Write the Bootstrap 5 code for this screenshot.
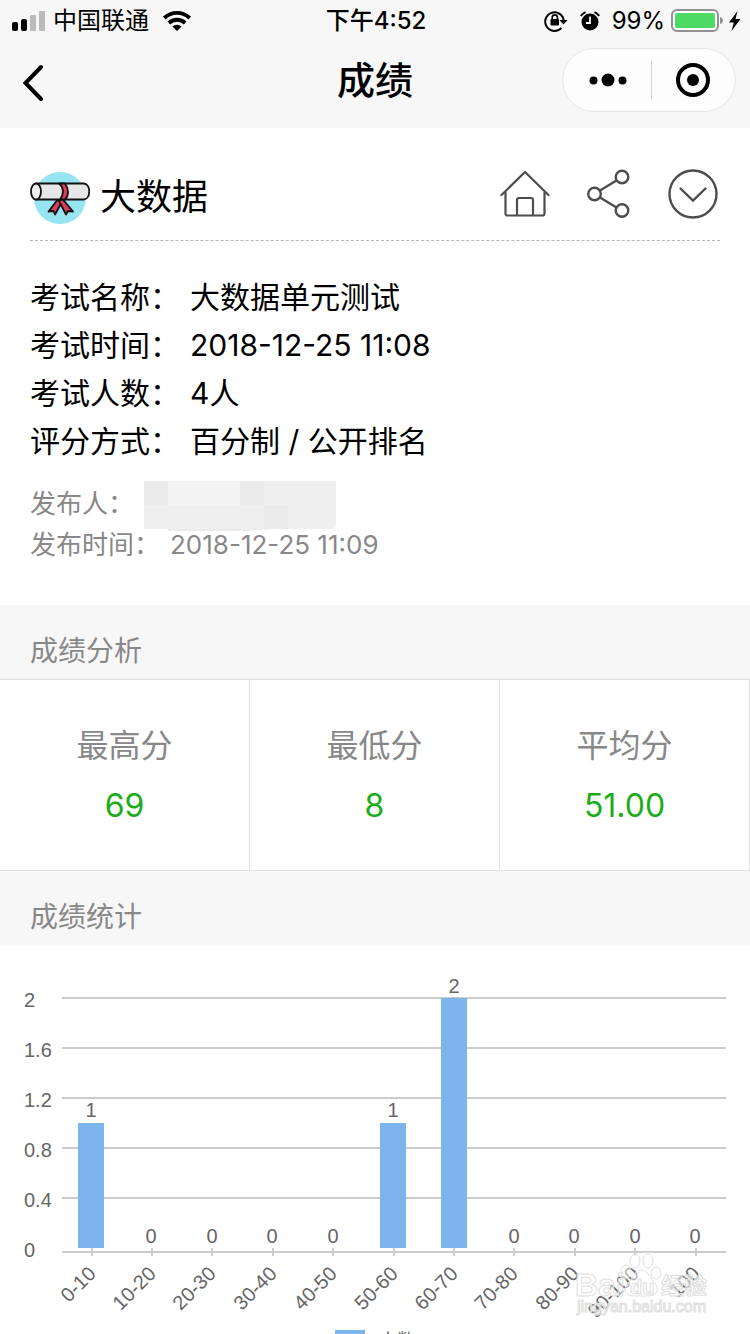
<!DOCTYPE html>
<html lang="zh-CN">
<head>
<meta charset="utf-8">
<meta name="viewport" content="width=device-width, initial-scale=1">
<title>成绩</title>
<link rel="stylesheet" href="https://cdn.jsdelivr.net/npm/bootstrap@5.3.0/dist/css/bootstrap.min.css">
<script src="https://cdn.jsdelivr.net/npm/bootstrap@5.3.0/dist/js/bootstrap.bundle.min.js"></script>
<style>
  body { font-family: Inter, "Noto Sans CJK SC", sans-serif; color: #000; background: #fff; overflow-x: hidden; }
  svg { display: block; flex: none; }
  .top-area { background: #f7f7f7; }
  .equal { flex: 1 1 0; }
  .status-bar { height: 40px; font-size: 24px; line-height: 40px; padding: 2px 9px 0 11px; }
  .signal { margin-left: 1px; margin-right: 7px; }
  .clock { font-weight: 500; }
  .status-right { gap: 12px; }
  .power { gap: 6px; }
  .nav-bar { height: 88px; padding: 0 14px 8px; }
  .back { padding: 8px 0 0 8px; }
  .nav-title { font-size: 38px; line-height: 48px; font-weight: 500; }
  .capsule { height: 64px; width: 174px; border: 1px solid #e6e6e6; background: #fdfdfd; border-radius: 32px; }
  .capsule .split { width: 1px; height: 38px; background: #d2d2d2; }
  .bare { border: 0; background: none; color: inherit; }
  .bare:not(.back) { padding: 0; }
  .exam { padding: 40px 30px; }
  .exam-head { height: 73px; padding-bottom: 14px; border-bottom: 1px dashed #b4b9b4; }
  .exam-title { gap: 10px; }
  .exam-name { font-size: 36px; line-height: 48px; font-weight: 400; }
  .tools { color: #4d4d4d; gap: 37px; padding: 0 2px 6px 0; }
  .facts { font-size: 30px; line-height: 48px; padding-top: 32px; }
  .facts dt, .facts dd, .origin dt, .origin dd { font-weight: inherit; margin: 0; }
  .facts dt { width: 160px; }
  .origin { font-size: 26px; line-height: 40px; padding-top: 16px; color: #888; }
  .origin dt { width: 140px; }
  .origin .masked { height: 44px; line-height: 46px; }
  .origin .masked dt { width: 114px; }
  .section-title { font-size: 28px; line-height: 44px; padding: 24px 30px 6px; color: #888; background: #f7f7f7; font-weight: 400; }
  .stats { border-top: 1px solid #e0e0e0; border-bottom: 1px solid #e0e0e0; text-align: center; font-size: 32px; line-height: 60px; }
  .stats .cell { border-right: 1px solid #e0e0e0; padding: 36px 0 34px; }
  .stats dt { font-weight: 400; color: #888; }
  .stats dd { margin: 0; color: #1aad19; }
  .chart { width: 100%; height: auto; font-family: "Liberation Sans", "Noto Sans CJK SC", sans-serif; font-size: 20px; fill: #666; }
</style>
</head>
<body>
<header class="top-area">
  <div class="status-bar d-flex align-items-center">
    <div class="equal d-flex align-items-center">
      <svg class="signal" width="34" height="20" viewBox="0 0 34 20" aria-hidden="true"><rect y="11" width="6" height="9" rx="2"/><rect x="9" y="8" width="6" height="12" rx="2"/><g fill="#bbb"><rect x="18" y="4" width="6" height="16" rx="1"/><rect x="27" width="6" height="20" rx="1"/></g></svg>
      <span>中国联通</span>
      <svg class="ms-2 ps-1" width="36" height="20" viewBox="0 0 28 20" aria-hidden="true"><g fill="none" stroke="#000" stroke-width="3.8"><path d="M1.300 7A18.500 18.500 0 0 1 26.700 7"/><path d="M5.800 12A12 12 0 0 1 22.200 12"/></g><path d="M9.300 15.600a7 7 0 0 1 9.400 0L14 20z"/></svg>
    </div>
    <time class="clock">下午4:52</time>
    <div class="equal status-right d-flex align-items-center justify-content-end">
      <svg width="24" height="22" viewBox="0 0 24 22" aria-hidden="true"><path d="M17.500 17.800A9.300 9.300 0 1 1 19.800 11" fill="none" stroke="#000" stroke-width="2"/><path d="M15.500 10h8l-4 4.500z"/><rect x="6.500" y="9" width="8.500" height="6.500" rx="1"/><path d="M8.200 9.500V7.500a2.600 2.600 0 0 1 5.200 0v2" fill="none" stroke="#000" stroke-width="1.600"/></svg>
      <svg width="20" height="20" viewBox="0 0 20 20" aria-hidden="true"><circle cx="10" cy="11" r="8.500"/><path d="M.8 4.800A12 12 0 0 1 5.500 1.100M19.200 4.800A12 12 0 0 0 14.500 1.100" stroke="#000" stroke-width="2" fill="none"/><path d="M10 5.500V12H6" stroke="#f7f7f7" stroke-width="1.800" fill="none"/></svg>
      <div class="power d-flex align-items-center">
        <span>99%</span>
        <svg width="52" height="24" viewBox="0 0 52 24" aria-hidden="true"><rect x="1" y="1" width="46" height="21" rx="5" fill="#fff" stroke="#929292" stroke-width="2"/><rect x="4" y="4" width="40" height="15" rx="2" fill="#4cd964"/><path d="M49 8q3 1 3 3.500T49 15z" fill="#929292"/></svg>
        <svg width="12" height="20" viewBox="1 0 12 20" aria-hidden="true"><path d="M9.500 0L1 11.500h4.800L3.500 20 12.500 8H7.500z"/></svg>
      </div>
    </div>
  </div>
  <nav class="nav-bar d-flex align-items-center" aria-label="页面导航">
    <div class="equal"><button class="bare back" type="button" aria-label="返回"><svg width="24" height="40" viewBox="0 0 24 40"><path d="M19 6L3.500 22L19 38" fill="none" stroke="#000" stroke-width="4" stroke-linecap="round"/></svg></button></div>
    <h1 class="nav-title m-0">成绩</h1>
    <div class="equal d-flex justify-content-end">
      <div class="capsule d-flex align-items-center">
        <button class="bare flex-fill d-flex justify-content-center" type="button" aria-label="更多"><svg width="40" height="20" viewBox="0 0 40 20"><circle cx="6.500" cy="10.500" r="4"/><circle cx="21" cy="10" r="6.500"/><circle cx="35.500" cy="10.500" r="4"/></svg></button>
        <span class="split"></span>
        <button class="bare flex-fill d-flex justify-content-center" type="button" aria-label="关闭"><svg width="36" height="36" viewBox="0 0 36 36"><circle cx="18" cy="18" r="15" fill="none" stroke="#000" stroke-width="4"/><circle cx="18" cy="18" r="6"/></svg></button>
      </div>
    </div>
  </nav>
</header>
<main>
  <section class="exam">
    <div class="exam-head d-flex align-items-center justify-content-between">
      <div class="exam-title d-flex align-items-center">
        <svg width="60" height="56" viewBox="0 -2 60 56" aria-hidden="true"><circle cx="30" cy="27" r="26" fill="#97e4f3"/><g stroke="#111" stroke-width="1.800" stroke-linejoin="round"><path d="M28 28L18.500 40.500l5-.5 1.500 3.500L33 29z" fill="#d83d5e"/><path d="M32.500 28L43 40.500l-5-.5-2 3.500L28.500 29z" fill="#d83d5e"/><path d="M6 12.500h48c7 1 7 15 0 16H6z" fill="#e6e6e8"/><ellipse cx="6" cy="20.500" rx="5" ry="8" fill="#eee"/><path d="M29 12.500h6c4 5 4 12 0 16h-5c4-5 4-12-1-16z" fill="#d83d5e"/></g></svg>
        <h2 class="exam-name m-0">大数据</h2>
      </div>
      <div class="tools d-flex align-items-center">
        <button class="bare" type="button" aria-label="首页"><svg width="52" height="50" viewBox="0 0 52 50" fill="none" stroke="currentColor" stroke-width="2.200" stroke-linecap="round" stroke-linejoin="round"><path d="M3.500 26L27 3l23.500 23M7.500 23v21.500q0 2 2 2h35q2 0 2-2V23M19 46V31q0-2 2-2h12q2 0 2 2v15"/></svg></button>
        <button class="bare" type="button" aria-label="分享"><svg width="44" height="50" viewBox="0 0 44 50" fill="none" stroke="currentColor" stroke-width="2.400"><circle cx="7.500" cy="25" r="6.300"/><circle cx="35" cy="8" r="6.300"/><circle cx="35" cy="41.500" r="6.300"/><path d="M13 21.500L29.500 11.500M13 28.500L29.500 38.500"/></svg></button>
        <button class="bare" type="button" aria-label="展开"><svg width="50" height="50" viewBox="0 0 50 50" fill="none" stroke="currentColor" stroke-width="2.400" stroke-linecap="round"><circle cx="25" cy="25" r="23.500"/><path d="M12.500 19.500L25 31.500l12.500-12"/></svg></button>
      </div>
    </div>
    <dl class="facts m-0">
      <div class="d-flex"><dt>考试名称：</dt><dd>大数据单元测试</dd></div>
      <div class="d-flex"><dt>考试时间：</dt><dd>2018-12-25 11:08</dd></div>
      <div class="d-flex"><dt>考试人数：</dt><dd>4人</dd></div>
      <div class="d-flex"><dt>评分方式：</dt><dd>百分制 / 公开排名</dd></div>
    </dl>
    <dl class="origin m-0">
      <div class="masked d-flex"><dt>发布人：</dt><dd><svg width="192" height="50" viewBox="0 0 192 50" role="img" aria-label="已隐藏"><path d="M0 0H192V44Q192 48 186 48H0z" fill="#efefef"/><path d="M24 48H130L100 50H24z" fill="#eaeaea"/><path d="M24 0h72v24H24z" fill="#f3f3f3"/><path d="M0 0h24v24H0zM96 0h24v24H96zM120 24h24v24h-24z" fill="#ebebeb"/></svg></dd></div>
      <div class="d-flex"><dt>发布时间：</dt><dd>2018-12-25 11:09</dd></div>
    </dl>
  </section>
  <section>
    <h2 class="section-title m-0">成绩分析</h2>
    <dl class="stats row g-0 m-0">
      <div class="cell col-4"><dt>最高分</dt><dd>69</dd></div>
      <div class="cell col-4"><dt>最低分</dt><dd>8</dd></div>
      <div class="cell col-4"><dt>平均分</dt><dd>51.00</dd></div>
    </dl>
  </section>
  <section>
    <h2 class="section-title m-0">成绩统计</h2>
    <svg class="chart" viewBox="0 945 750 389" role="img" aria-label="各分数段人数">
      <path d="M62 998H726M62 1048H726M62 1098H726M62 1148H726M62 1198H726M62 1252H726" stroke="#ccc" stroke-width="2"/>
      <path d="M92 1248v8M152 1248v8M212 1248v8M273 1248v8M333 1248v8M394 1248v8M454 1248v8M514 1248v8M575 1248v8M635 1248v8M696 1248v8" stroke="#ccc" stroke-width="2"/>
      <g><text x="24" y="1007">2</text><text x="24" y="1057">1.6</text><text x="24" y="1107">1.2</text><text x="24" y="1157">0.8</text><text x="24" y="1207">0.4</text><text x="24" y="1257">0</text></g>
      <g fill="#7cb5ec"><rect x="78" y="1123" width="26" height="125"/><rect x="380" y="1123" width="26" height="125"/><rect x="441" y="998" width="26" height="250"/><rect x="335" y="1330" width="30" height="20"/></g>
      <g text-anchor="middle"><text x="91" y="1117">1</text><text x="151" y="1243">0</text><text x="212" y="1243">0</text><text x="272" y="1243">0</text><text x="333" y="1243">0</text><text x="393" y="1117">1</text><text x="454" y="993">2</text><text x="514" y="1243">0</text><text x="574" y="1243">0</text><text x="635" y="1243">0</text><text x="695" y="1243">0</text></g>
      <g text-anchor="end">
        <text transform="translate(97 1275) rotate(-45)">0-10</text><text transform="translate(157 1275) rotate(-45)">10-20</text><text transform="translate(217 1275) rotate(-45)">20-30</text><text transform="translate(278 1275) rotate(-45)">30-40</text><text transform="translate(338 1275) rotate(-45)">40-50</text><text transform="translate(399 1275) rotate(-45)">50-60</text><text transform="translate(459 1275) rotate(-45)">60-70</text><text transform="translate(519 1275) rotate(-45)">70-80</text><text transform="translate(580 1275) rotate(-45)">80-90</text><text transform="translate(640 1275) rotate(-45)">90-100</text><text transform="translate(701 1275) rotate(-45)">100</text>
      </g>
      <text x="379" y="1347" font-size="18">人数</text>
      <g fill="#fff" fill-opacity=".5" stroke="#dedede" stroke-width="1">
        <ellipse cx="626" cy="1272" rx="5" ry="7"/><ellipse cx="635" cy="1261" rx="5" ry="7"/><ellipse cx="648" cy="1261" rx="5" ry="7"/><ellipse cx="656" cy="1273" rx="5" ry="6"/><path d="M641 1270c7 0 8 7 13 12 7 8 2 14-6 14h-14c-8 0-12-6-6-13 5-4 6-13 13-13z"/>
        <text x="575" y="1296" font-size="32" font-weight="700">Bai</text><text x="630" y="1294" font-size="20" font-weight="700">du</text><text x="661" y="1294" font-size="23" font-weight="700">经验</text>
        <text x="577" y="1312" font-size="16">jingyan.baidu.com</text>
      </g>
    </svg>
  </section>
</main>
</body>
</html>
